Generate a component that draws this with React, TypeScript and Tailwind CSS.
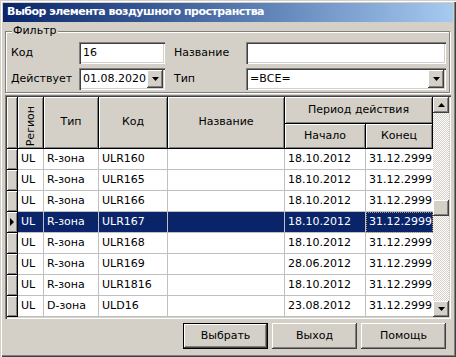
import React from "react";

const rows = [
  ["UL", "R-зона", "ULR160", "18.10.2012", "31.12.2999"],
  ["UL", "R-зона", "ULR165", "18.10.2012", "31.12.2999"],
  ["UL", "R-зона", "ULR166", "18.10.2012", "31.12.2999"],
  ["UL", "R-зона", "ULR167", "18.10.2012", "31.12.2999"],
  ["UL", "R-зона", "ULR168", "18.10.2012", "31.12.2999"],
  ["UL", "R-зона", "ULR169", "28.06.2012", "31.12.2999"],
  ["UL", "R-зона", "ULR1816", "18.10.2012", "31.12.2999"],
  ["UL", "D-зона", "ULD16", "23.08.2012", "31.12.2999"],
];
const selected = 3;

const sunken =
  "shadow-[inset_1px_1px_#808080,inset_2px_2px_#404040,inset_-1px_-1px_#ffffff,inset_-2px_-2px_#d4d0c8]";
const raised =
  "bg-[#d4d0c8] shadow-[inset_-1px_-1px_#404040,inset_1px_1px_#ffffff,inset_-2px_-2px_#808080]";
const head =
  "bg-[#d4d0c8] border-r border-b border-[#000] shadow-[inset_1px_1px_#ffffff,inset_-1px_-1px_#808080] flex items-center justify-center";

function Arrow({ dir = "down" }: { dir?: "up" | "down" }) {
  return (
    <svg width="7" height="4" viewBox="0 0 7 4">
      {dir === "down" ? (
        <path d="M0 0h7L3.5 4z" fill="#000" />
      ) : (
        <path d="M0 4h7L3.5 0z" fill="#000" />
      )}
    </svg>
  );
}

function Field({ value, w, combo }: { value: string; w: string; combo?: boolean }) {
  return (
    <div className={`${w} h-[22px] bg-white ${sunken} flex items-center p-[2px]`}>
      <span className="flex-1 pl-[2px] truncate">{value}</span>
      {combo && (
        <div className={`w-[16px] h-[18px] ${raised} flex items-center justify-center`}>
          <Arrow />
        </div>
      )}
    </div>
  );
}

function Btn({ label, def }: { label: string; def?: boolean }) {
  return (
    <div className={`w-[85px] h-[26px] ${def ? "border border-black" : ""}`}>
      <div className={`w-full h-full ${raised} flex items-center justify-center`}>{label}</div>
    </div>
  );
}

export default function App() {
  return (
    <div className="w-[456px] h-[357px] bg-[#d4d0c8] p-[3px] text-[11px] text-black font-['DejaVu_Sans',sans-serif] shadow-[inset_1px_1px_#d4d0c8,inset_2px_2px_#ffffff,inset_-1px_-1px_#404040,inset_-2px_-2px_#808080] flex flex-col">
      {/* title bar */}
      <div className="h-[19px] bg-gradient-to-r from-[#0a246a] to-[#a6caf0] flex items-center pl-[4px] text-white font-bold tracking-[-0.5px]">
        Выбор элемента воздушного пространства
      </div>

      <div className="px-[2px] flex flex-col">
        {/* filter group */}
        <div className="relative mt-[9px] w-[445px] h-[62px] border border-[#808080] shadow-[inset_1px_1px_#ffffff,1px_1px_#ffffff] pt-[10px] pl-[5px] flex flex-col gap-[4px]">
          <span className="absolute -top-[8px] left-[6px] bg-[#d4d0c8] px-[1px] leading-[14px]">Фильтр</span>
          <div className="flex items-center">
            <span className="w-[68px]">Код</span>
            <Field value="16" w="w-[86px]" />
            <span className="w-[72px] ml-[9px]">Название</span>
            <Field value="" w="w-[200px]" />
          </div>
          <div className="flex items-center">
            <span className="w-[68px]">Действует</span>
            <Field value="01.08.2020" w="w-[86px]" combo />
            <span className="w-[72px] ml-[9px]">Тип</span>
            <Field value="=ВСЕ=" w="w-[200px]" combo />
          </div>
        </div>

        {/* grid */}
        <div className={`mt-[2px] w-[446px] h-[224px] p-[2px] bg-[#d4d0c8] ${sunken} flex`}>
          <div className="w-[426px] flex flex-col overflow-hidden">
            <div className="flex h-[52px]">
              <div className={`w-[11px] ${head}`} />
              <div className={`w-[26px] ${head} !items-end pb-[2px]`}>
                <span className="[writing-mode:vertical-rl] rotate-180 leading-[12px]">Регион</span>
              </div>
              <div className={`w-[55px] ${head}`}>Тип</div>
              <div className={`w-[69px] ${head}`}>Код</div>
              <div className={`w-[117px] ${head}`}>Название</div>
              <div className="w-[148px] flex flex-col">
                <div className={`h-[27px] ${head}`}>Период действия</div>
                <div className="flex h-[25px]">
                  <div className={`w-[81px] ${head}`}>Начало</div>
                  <div className={`w-[67px] ${head}`}>Конец</div>
                </div>
              </div>
            </div>
            {rows.map((r, i) => {
              const sel = i === selected;
              const cell = `h-[21px] border-r border-b border-[#c0c0c0] pl-[3px] flex items-center whitespace-nowrap overflow-hidden ${
                sel ? "bg-[#0a246a] text-white" : "bg-white"
              }`;
              return (
                <div key={i} className="flex">
                  <div className={`w-[11px] h-[21px] ${head}`}>
                    {sel && (
                      <svg width="4" height="8" viewBox="0 0 4 8">
                        <path d="M0 0L4 4L0 8z" fill="#000" />
                      </svg>
                    )}
                  </div>
                  <div className={`w-[26px] ${cell}`}>{r[0]}</div>
                  <div className={`w-[55px] ${cell}`}>{r[1]}</div>
                  <div className={`w-[69px] ${cell}`}>{r[2]}</div>
                  <div className={`w-[117px] ${cell}`}></div>
                  <div className={`w-[81px] ${cell}`}>{r[3]}</div>
                  <div className={`w-[67px] ${cell} !border-r-0 ${sel ? "outline outline-1 outline-dotted outline-[#b09a60] -outline-offset-1" : ""}`}>{r[4]}</div>
                </div>
              );
            })}
          </div>

          {/* scrollbar */}
          <div className="w-[16px] flex flex-col">
            <div className={`h-[16px] ${raised} flex items-center justify-center`}>
              <Arrow dir="up" />
            </div>
            <div className="h-[87px] bg-[repeating-conic-gradient(#d4d0c8_0_25%,#ffffff_0_50%)] bg-[length:2px_2px]" />
            <div className={`h-[16px] ${raised}`} />
            <div className="flex-1 bg-[repeating-conic-gradient(#d4d0c8_0_25%,#ffffff_0_50%)] bg-[length:2px_2px]" />
            <div className={`h-[16px] ${raised} flex items-center justify-center`}>
              <Arrow />
            </div>
          </div>
        </div>

        {/* buttons */}
        <div className="mt-[4px] flex justify-end gap-[4px] pr-[5px]">
          <Btn label="Выбрать" def />
          <Btn label="Выход" />
          <Btn label="Помощь" />
        </div>
      </div>
    </div>
  );
}
